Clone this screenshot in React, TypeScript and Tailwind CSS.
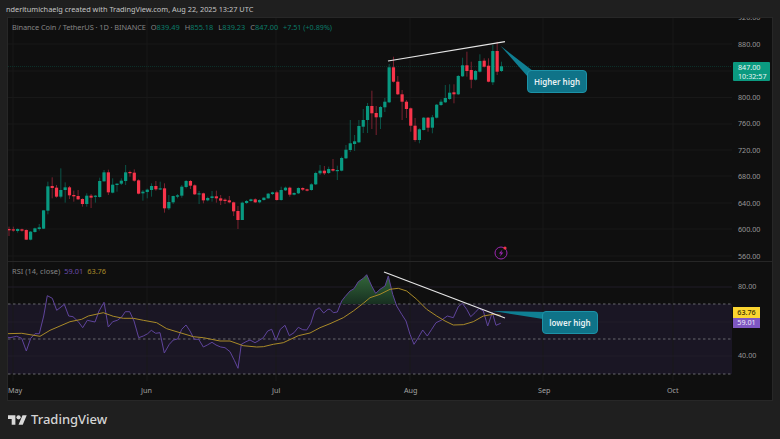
type Candle = [number, number, number, number, 0 | 1]

// first stretch read off a 3x crop, offset from y=130
const early: Candle[] = [
  [290, 297, 301, 318, 0], [290, 298, 300, 305, 0], [295, 297, 303, 308, 1], [296, 298, 302, 305, 0],
  [298, 300, 329, 330, 0], [303, 305, 329, 331, 1], [293, 295, 306, 308, 1], [282, 292, 297, 302, 1],
  [241, 241, 296, 297, 1], [155, 169, 242, 253, 1], [142, 168, 174, 205, 0], [165, 173, 200, 203, 0],
  [115, 180, 200, 205, 1], [157, 172, 180, 218, 1], [168, 172, 196, 207, 0], [182, 195, 199, 215, 0],
  [180, 198, 208, 210, 0], [205, 207, 222, 230, 0], [190, 197, 222, 230, 1], [192, 197, 203, 234, 0],
  [195, 197, 199, 218, 1], [143, 153, 201, 203, 1], [120, 127, 154, 155, 1], [119, 127, 187, 195, 0],
  [145, 164, 188, 190, 1], [160, 161, 165, 185, 1], [145, 152, 161, 165, 1], [105, 127, 153, 165, 1],
  [122, 126, 129, 140, 0], [118, 128, 152, 155, 0], [148, 151, 191, 193, 0], [180, 185, 190, 212, 1],
  [176, 179, 186, 205, 1], [160, 168, 180, 200, 1], [153, 168, 178, 182, 0], [155, 175, 178, 180, 1],
  [160, 175, 235, 248, 0], [195, 216, 235, 240, 1], [197, 198, 217, 222, 1], [192, 196, 200, 205, 1],
  [165, 170, 197, 203, 1], [150, 153, 171, 175, 1], [150, 153, 167, 177, 0], [163, 166, 193, 195, 0],
  [183, 190, 192, 222, 1], [188, 190, 211, 220, 0], [200, 204, 211, 214, 1], [183, 199, 204, 215, 1],
  [182, 199, 205, 218, 0], [195, 205, 212, 225, 0], [205, 209, 213, 222, 0], [198, 211, 217, 220, 0],
  [215, 217, 244, 258, 0], [228, 243, 270, 297, 0], [215, 218, 270, 270, 1], [210, 213, 219, 222, 1],
  [206, 208, 213, 215, 1], [205, 208, 217, 219, 0], [208, 210, 217, 220, 1], [202, 203, 210, 212, 1],
  [189, 191, 205, 206, 1], [185, 187, 192, 195, 1], [182, 187, 210, 212, 0], [170, 180, 210, 212, 1],
  [170, 173, 181, 183, 1], [170, 173, 194, 200, 0], [187, 189, 194, 196, 1], [172, 174, 190, 192, 1],
  [172, 174, 179, 183, 0], [176, 178, 182, 184, 0], [160, 163, 180, 182, 1], [125, 129, 163, 165, 1],
  [105, 122, 130, 135, 1], [108, 122, 130, 135, 0], [110, 117, 129, 132, 1], [87, 117, 122, 125, 0],
  [107, 120, 123, 150, 1], [80, 84, 122, 124, 1],
]

const late: Candle[] = [
  [145, 149.7, 158.3, 159, 1], [120, 143.3, 150, 152, 1], [135, 141.3, 144, 151, 1], [120, 126, 142.3, 143, 1],
  [109, 120, 126.7, 133, 1], [103, 106, 120, 133, 1], [90.7, 106, 113.3, 129, 0], [106, 113, 117.3, 135, 0],
  [106, 107, 117.3, 129, 1], [98, 101.7, 107.3, 112, 1], [64, 67.3, 102.3, 103, 1], [56.7, 67.3, 81.7, 82.5, 0],
  [76, 81.7, 94.3, 95, 0], [90, 94.3, 101.7, 120, 0], [100, 101.7, 109, 118, 0], [107.5, 108.3, 125.7, 131.7, 0],
  [118, 125.7, 140, 141.7, 0], [128.3, 129.3, 140, 143.3, 1], [117, 117.7, 130, 130.5, 1], [117, 117.7, 127.7, 131.7, 0],
  [115, 117.3, 127.7, 133.3, 1], [104, 104.7, 117.7, 118.5, 1], [99.3, 101.7, 105, 106, 1], [85, 98, 102.3, 103, 1],
  [84.3, 92.7, 99, 100, 1], [84.3, 92.3, 94.3, 103.3, 0], [75, 76, 94.3, 95, 1], [57.7, 65.3, 76.3, 77, 1],
  [51.7, 65.3, 71, 76.7, 0], [61.7, 70, 79.7, 88.3, 0], [70, 71, 79.7, 80.5, 1], [54.3, 61, 71.7, 72.5, 1],
  [58.3, 60.7, 66.7, 67.5, 0], [58.3, 65.7, 81.7, 82.3, 0], [45, 51, 82.3, 85, 1], [41.7, 51, 71.7, 75, 0],
  [61.7, 66.3, 71, 72, 1],
]

const candles: Candle[] = [
  ...early.map((c) => [130 + c[0] / 3, 130 + c[1] / 3, 130 + c[2] / 3, 130 + c[3] / 3, c[4]] as Candle),
  ...late,
]

const fromLeft = (pts: number[][]) => pts.map(([x, y]) => [x / 3, 260 + y / 3])
const fromPeak = (pts: number[][]) => pts.map(([x, y]) => [330 + x / 3, 265 + y / 3])
const toPoints = (pts: number[][]) => pts.map(([x, y]) => `${x.toFixed(1)},${y.toFixed(1)}`).join(' ')

const rsiPeak = fromPeak([
  [0, 130], [10, 140], [22, 138], [35, 105], [45, 92], [60, 75], [72, 68], [85, 47], [100, 37], [110, 26], [125, 60],
  [137, 82], [150, 70], [165, 60], [175, 30], [188, 85], [200, 120], [215, 145], [228, 165], [240, 205], [252, 235],
  [265, 215], [278, 192], [292, 210], [305, 190], [318, 170], [335, 162], [352, 150], [370, 155], [385, 122], [397, 112],
  [410, 130], [422, 152], [435, 140], [447, 127], [460, 135], [473, 180], [487, 140], [498, 178], [512, 172],
])

const rsi = [
  ...fromLeft([
    [20, 228], [30, 230], [50, 226], [65, 232], [79, 270], [92, 232], [105, 218], [118, 218], [131, 165], [142, 104],
    [157, 112], [170, 148], [183, 138], [193, 130], [206, 165], [219, 167], [235, 182], [248, 200], [262, 178], [285, 183],
    [297, 150], [312, 124], [325, 198], [338, 182], [352, 178], [365, 168], [376, 152], [389, 152], [402, 180], [416, 230],
    [430, 225], [443, 218], [454, 208], [467, 217], [480, 215], [493, 276], [508, 250], [520, 237], [533, 234], [545, 205],
    [558, 192], [570, 210], [583, 235], [596, 235], [610, 258], [622, 252], [636, 244], [648, 252], [662, 258], [675, 260],
    [690, 272], [703, 298], [714, 322], [724, 250], [738, 242], [750, 237], [765, 245], [778, 238], [790, 230], [803, 210],
    [815, 205], [828, 238], [841, 205], [855, 193], [868, 224], [882, 215], [895, 199], [908, 206], [920, 207], [932, 188],
    [945, 148], [958, 140], [971, 156], [984, 145],
  ]),
  ...rsiPeak,
]

const rsiMa = [
  ...fromLeft([
    [20, 218], [65, 217], [120, 226], [150, 208], [180, 195], [210, 182], [245, 175], [265, 165], [310, 155], [340, 166],
    [370, 172], [400, 172], [430, 178], [470, 185], [500, 203], [540, 215], [580, 227], [610, 230], [660, 240], [690, 240],
    [730, 254], [770, 258], [790, 257], [820, 250], [850, 245], [895, 224], [930, 216], [960, 200],
  ]),
  ...fromPeak([
    [0, 173], [40, 155], [70, 135], [100, 112], [120, 95], [150, 85], [180, 70], [205, 67], [230, 75], [260, 100], [290, 130],
    [320, 150], [345, 165], [370, 177], [400, 176], [430, 167], [460, 150], [490, 145], [512, 148],
  ]),
]

const monthLines = [13, 147, 276, 410, 543, 673]
const priceLines = [44, 71, 97.5, 124, 150, 176, 203, 229, 256]
const priceLabels = ['920.00', '880.00', '', '800.00', '760.00', '720.00', '680.00', '640.00', '600.00', '560.00']

function PricePane() {
  return (
    <svg viewBox="8 18 724 243" className="block h-[243px] w-[724px]">
      {monthLines.map((x) => (
        <line key={x} x1={x} x2={x} y1={18} y2={261} stroke="#181818" strokeWidth={1} />
      ))}
      {priceLines.map((y) => (
        <line key={y} x1={8} x2={732} y1={y} y2={y} stroke="#181818" strokeWidth={1} />
      ))}
      <line x1={8} x2={732} y1={66.5} y2={66.5} stroke="#0b3029" strokeWidth={1} strokeDasharray="1 1" />
      {candles.map((c, i) => {
        const x = 9 + 4.32 * i
        const up = c[4] === 1
        return (
          <g key={i}>
            <line x1={x} x2={x} y1={c[0]} y2={c[3]} stroke={up ? '#0b5549' : '#7a2230'} strokeWidth={1} />
            <rect x={x - 1.6} y={c[1]} width={3.2} height={Math.max(c[2] - c[1], 1.2)} fill={up ? '#089981' : '#f7344a'} />
          </g>
        )
      })}
      <line x1={388} y1={61} x2={505} y2={41.7} stroke="#e6e6e6" strokeWidth={1.2} />
      <polygon points="500.7,46 533,71 528,77" fill="#0f7f93" />
      <circle cx={501} cy={253} r={6} fill="none" stroke="#9c27b0" strokeWidth={1} />
      <path d="M502.5 249.5 498.8 253.6H501L499.8 256.6 503.4 252.4H501.2Z" fill="#9c27b0" />
      <circle cx={505} cy={248} r={1.6} fill="#f23645" />
    </svg>
  )
}

function RsiPane() {
  return (
    <svg viewBox="8 261 724 120" className="block h-[120px] w-[724px]">
      <defs>
        <linearGradient id="rsiFill" x1="0" y1="0" x2="0" y2="1">
          <stop offset="0" stopColor="#33683a" />
          <stop offset="1" stopColor="#10201a" />
        </linearGradient>
        <clipPath id="overbought">
          <rect x={8} y={261} width={724} height={42} />
        </clipPath>
      </defs>
      <rect x={8} y={303} width={724} height={70} fill="#1a1624" />
      {monthLines.map((x) => (
        <line key={x} x1={x} x2={x} y1={261} y2={381} stroke="#181818" strokeWidth={1} />
      ))}
      {[286, 321, 355].map((y) => (
        <line key={y} x1={8} x2={732} y1={y} y2={y} stroke="#201d29" strokeWidth={1} />
      ))}
      {[303, 338, 373].map((y) => (
        <line key={y} x1={8} x2={732} y1={y} y2={y} stroke="#66666c" strokeWidth={1} strokeDasharray="2.5 2.5" />
      ))}
      <polygon
        clipPath="url(#overbought)"
        fill="url(#rsiFill)"
        points={`${toPoints(rsiPeak.slice(2, 17))} 395,303 338,303`}
      />
      <polyline points={toPoints(rsi)} fill="none" stroke="#5f449c" strokeWidth={1} strokeLinejoin="round" />
      <polyline points={toPoints(rsiMa)} fill="none" stroke="#a98a28" strokeWidth={1} strokeLinejoin="round" />
      <line x1={384} y1={271} x2={505} y2={317} stroke="#e6e6e6" strokeWidth={1.2} />
      <polygon points="492.7,310 548,311 543,318" fill="#0f7f93" />
    </svg>
  )
}

function Callout({ text, className }: { text: string; className: string }) {
  return (
    <div
      className={`absolute flex h-[23px] items-center justify-center rounded-[4px] border border-[#1c93a8] bg-[#0f7388] text-[8px] font-semibold text-[#e8f1f3] ${className}`}
    >
      {text}
    </div>
  )
}

export default function App() {
  return (
    <div className="flex h-[439px] w-[780px] flex-col overflow-hidden bg-[#1f1f1f] font-['Noto_Sans',sans-serif]">
      <div className="flex h-[17px] shrink-0 items-center pl-[6px] pt-[3px] text-[7.35px] text-[#c4c4c4]">
        nderitumichaelg created with TradingView.com, Aug 22, 2025 13:27 UTC
      </div>

      <div className="ml-[7px] flex h-[384px] w-[766px] shrink-0 flex-col border border-[#272727] bg-[#0f0f0f]">
        <div className="flex h-[243px] shrink-0">
          <div className="relative h-[243px] w-[724px]">
            <PricePane />
            <div className="absolute left-[4px] top-[4px] flex items-center gap-[4px] text-[7.4px] leading-[10px] text-[#858585]">
              <span className="tracking-[-0.08px]">Binance Coin / TetherUS · 1D · BINANCE</span>
              <span className="ml-[1px]">O<span className="text-[#0b7b69]">839.49</span></span>
              <span className="ml-[1px]">H<span className="text-[#0b7b69]">855.18</span></span>
              <span className="ml-[1px]">L<span className="text-[#0b7b69]">839.23</span></span>
              <span className="ml-[1px]">C<span className="text-[#0b7b69]">847.00</span></span>
              <span className="ml-[1px] text-[7.2px] text-[#0b7b69]">+7.51 (+0.89%)</span>
            </div>
            <Callout text="Higher high" className="left-[519px] top-[52px] w-[60px]" />
          </div>
          <div className="relative w-[40px] overflow-hidden">
            <div className="-mt-[13.5px] flex flex-col pl-[6px] text-[7.2px] text-[#989898]">
              {priceLabels.map((label, i) => (
                <div key={i} className="flex h-[26.5px] items-center">
                  {label}
                </div>
              ))}
            </div>
            <div className="absolute left-[1px] top-[44px] flex h-[19px] w-[37px] flex-col justify-center rounded-[1px] bg-[#0b9a80] pl-[5px] text-[7.2px] leading-[8.6px] text-[#e6f5f2]">
              <span>847.00</span>
              <span>10:32:57</span>
            </div>
          </div>
        </div>

        <div className="flex h-[120px] shrink-0 border-t border-[#262626]">
          <div className="relative h-[119px] w-[724px] overflow-hidden">
            <RsiPane />
            <div className="absolute left-[4px] top-[4px] flex items-center gap-[4px] text-[7.4px] leading-[10px] text-[#858585]">
              <span className="tracking-[0.05px]">RSI (14, close)</span>
              <span className="text-[#6a4bab]">59.01</span>
              <span className="text-[#a98a28]">63.76</span>
            </div>
            <Callout text="lower high" className="left-[534px] top-[49px] w-[56px]" />
          </div>
          <div className="relative w-[40px] overflow-hidden">
            <div className="-mt-[10.5px] flex flex-col pl-[6px] text-[7.2px] text-[#989898]">
              <div className="flex h-[69px] items-center">80.00</div>
              <div className="flex h-[69px] items-center">40.00</div>
            </div>
            <div className="absolute left-[1px] top-[44.5px] flex h-[11px] w-[27px] items-center justify-center bg-[#fbd530] text-[7.2px] font-medium text-[#3a3000]">
              63.76
            </div>
            <div className="absolute left-[1px] top-[55.5px] flex h-[10.5px] w-[27px] items-center justify-center bg-[#7e57c2] text-[7.2px] text-[#f0eaf9]">
              59.01
            </div>
          </div>
        </div>

        <div className="flex h-[19px] shrink-0 items-center text-[7.2px] text-[#a3a3a3]">
          <div className="w-[133px]">May</div>
          <div className="w-[131px]">Jun</div>
          <div className="w-[132px]">Jul</div>
          <div className="w-[134px]">Aug</div>
          <div className="w-[129px]">Sep</div>
          <div>Oct</div>
        </div>
      </div>

      <div className="flex flex-1 items-center gap-[4px] pb-[1px] pl-[8px]">
        <svg viewBox="0 4 36 18" className="h-[10px] w-[19px]" fill="#d9d9d9">
          <path d="M14 22H7V11H0V4h14v18zM28 22h-8l7.5-18h8L28 22z" />
          <circle cx="20" cy="8" r="4" />
        </svg>
        <span className="text-[13px] font-medium leading-none text-[#d4d4d4]">TradingView</span>
      </div>
    </div>
  )
}
